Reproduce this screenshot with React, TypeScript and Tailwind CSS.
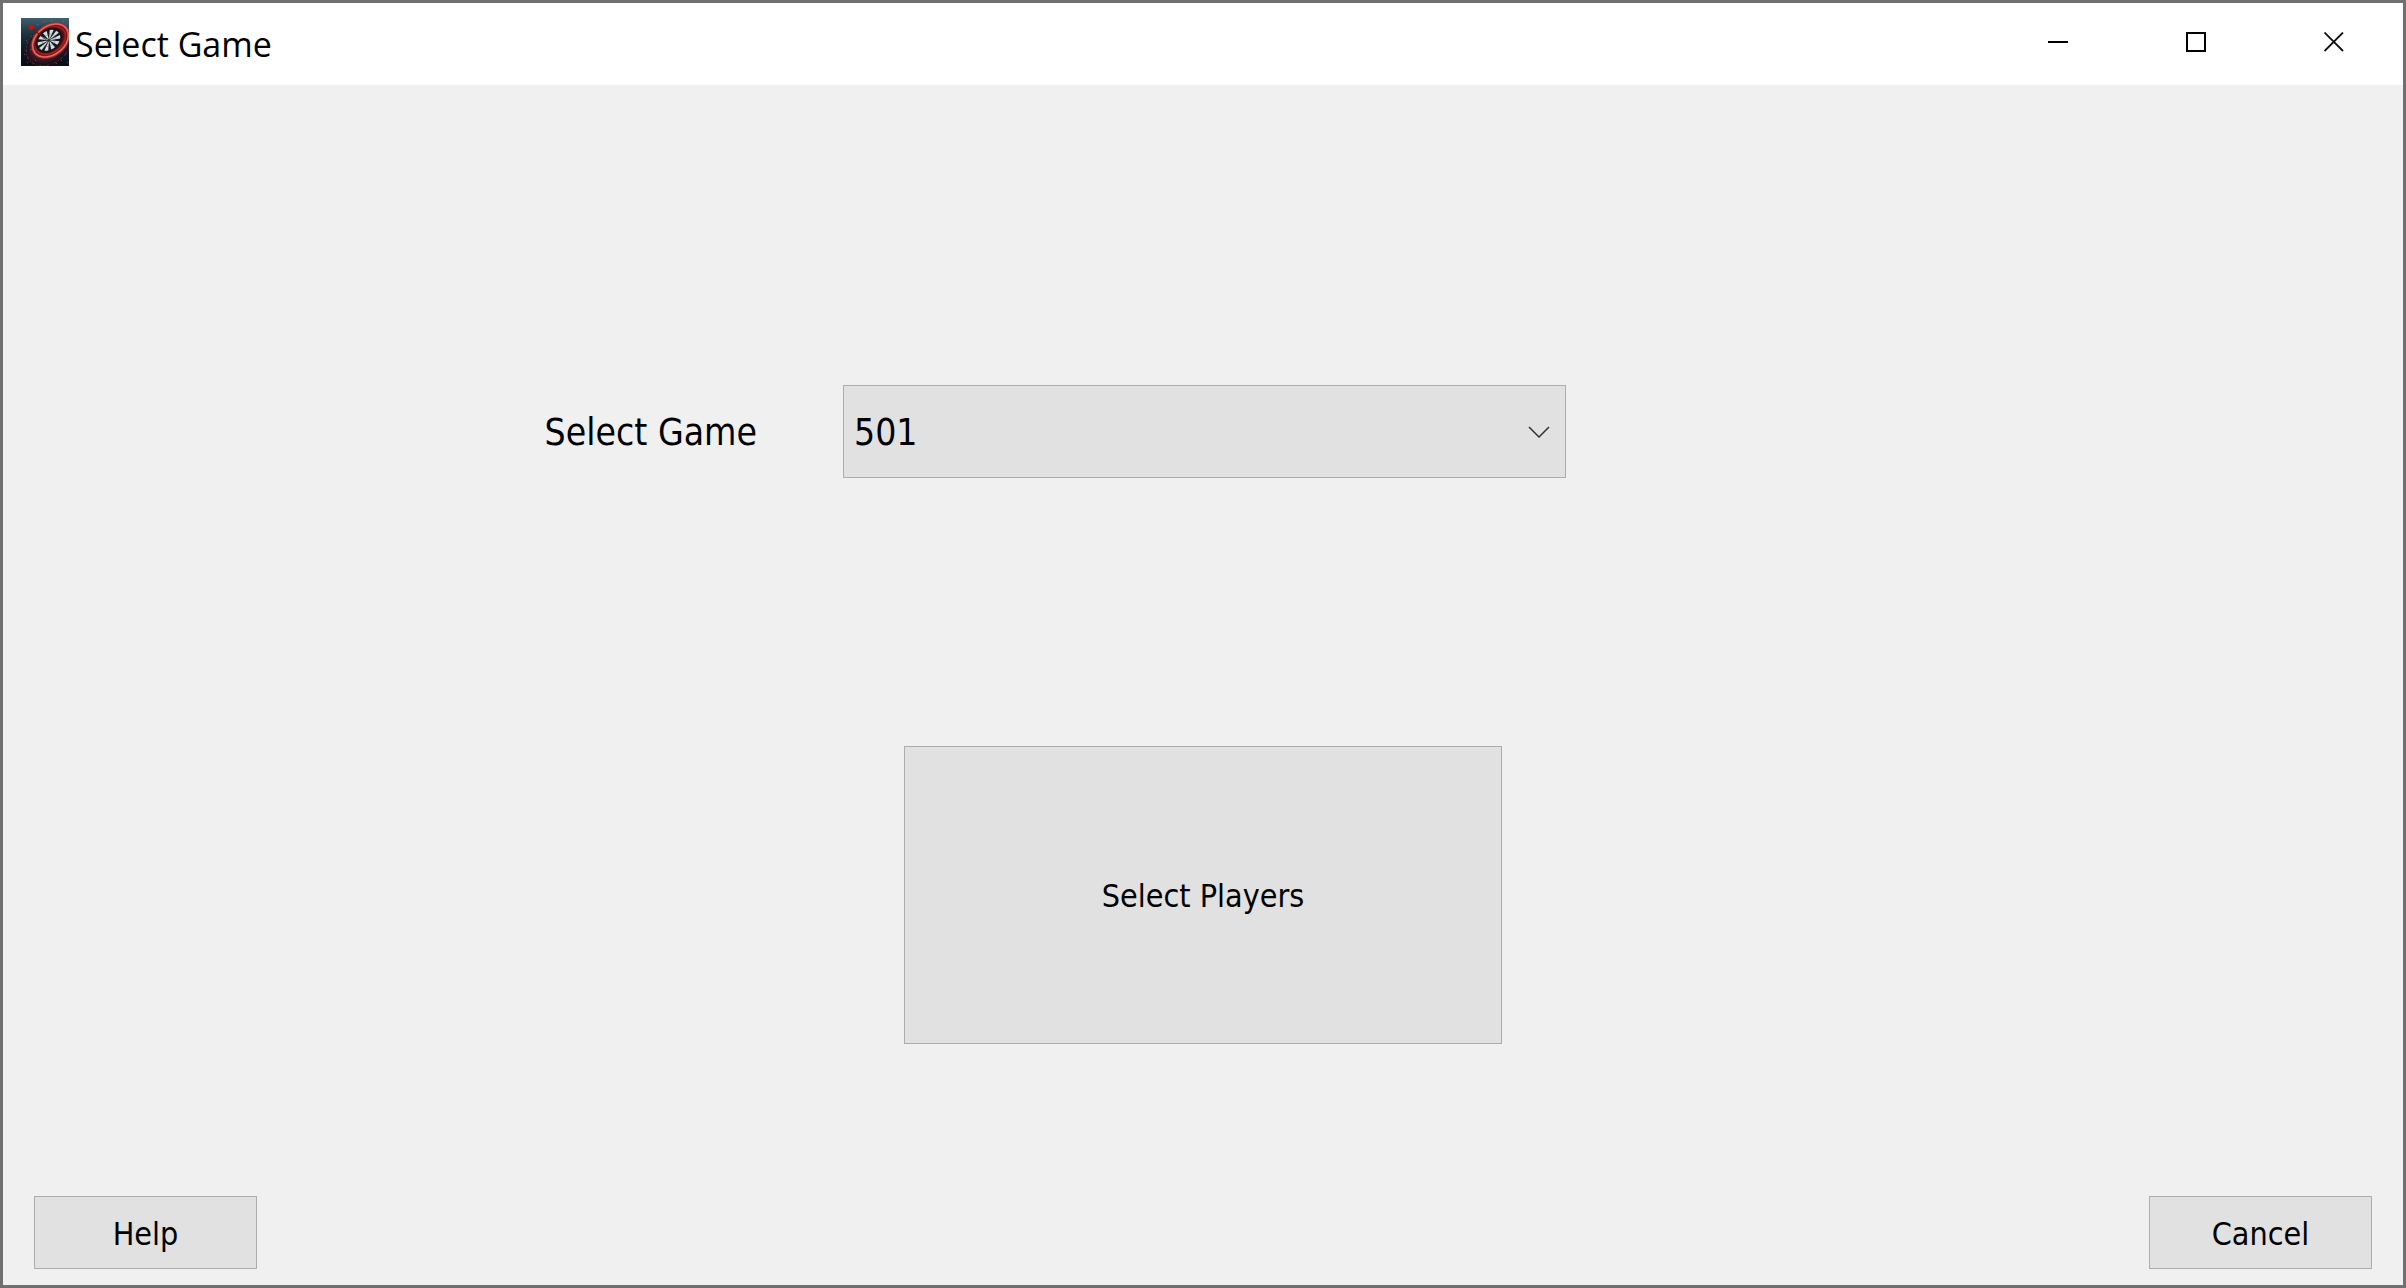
import { useState } from "react";

const SECTORS = Array.from({ length: 10 }, (_, i) => i * 36);
const SPARKS = [
  [23, 3], [30, 2], [16, 6], [42, 3], [5, 22], [9, 31], [3, 36], [14, 42], [40, 42], [44, 36], [35, 45], [6, 44], [12, 17], [46, 44],
];

function DartboardIcon() {
  return (
    <svg viewBox="0 0 48 48" className="size-12 shrink-0" aria-hidden="true">
      <defs>
        <linearGradient id="sky" x1="0.55" y1="0" x2="0.5" y2="1">
          <stop offset="0" stopColor="#41606e" />
          <stop offset="0.35" stopColor="#1d3341" />
          <stop offset="0.7" stopColor="#0c1824" />
          <stop offset="1" stopColor="#070d18" />
        </linearGradient>
        <radialGradient id="glow">
          <stop offset="0.6" stopColor="#6a1a20" stopOpacity="0.7" />
          <stop offset="0.85" stopColor="#3d1820" stopOpacity="0.5" />
          <stop offset="1" stopColor="#3a1420" stopOpacity="0" />
        </radialGradient>
        <clipPath id="frame">
          <rect width="48" height="48" />
        </clipPath>
      </defs>
      <g clipPath="url(#frame)">
        <rect width="48" height="48" fill="url(#sky)" />
        <g transform="translate(27 26) rotate(-38)">
          <ellipse rx="27" ry="20" fill="url(#glow)" />
          <ellipse rx="24.5" ry="18.5" cy="1" fill="none" stroke="#a3262c" strokeWidth="1.2" strokeDasharray="3 1.6 1 2" opacity="0.6" />
          <ellipse rx="22.6" ry="17" cy="1" fill="none" stroke="#1b1018" strokeWidth="1.6" strokeDasharray="4 1" opacity="0.7" />
        </g>
        <g transform="translate(29.5 22.5) rotate(-38)">
          <ellipse rx="20" ry="14.4" fill="#5c1014" />
          <ellipse rx="20" ry="14.4" fill="none" stroke="#c2373b" strokeWidth="3.4" opacity="0.5" />
          <ellipse rx="19.8" ry="14.2" fill="none" stroke="#ef6560" strokeWidth="1.5" />
          <ellipse rx="16.8" ry="11.6" fill="none" stroke="#a3211f" strokeWidth="1.6" />
        </g>
        <g transform="translate(28 22.3) rotate(-38) scale(1 0.74)">
          <circle r="15" fill="#2b0e11" />
          <circle r="13.6" fill="#17161b" />
          {SECTORS.map((a) => (
            <path key={a} d="M0 0 L-2.2 -12.2 A12.4 12.4 0 0 1 2.2 -12.2 Z" fill="#d3dde0" transform={`rotate(${a + 8})`} />
          ))}
          <circle r="7.4" fill="none" stroke="#4b565c" strokeWidth="0.4" />
          <circle r="1.6" fill="#2c3338" />
        </g>
        {SPARKS.map(([x, y]) => (
          <rect key={`${x}-${y}`} x={x} y={y} width="1" height="1" fill="#8fa7b3" opacity="0.4" />
        ))}
        <path d="M11 10 L20 18" stroke="#6d1a1e" strokeWidth="1.1" />
        <path d="M20 18 L27 23" stroke="#20242a" strokeWidth="0.8" />
        <path d="M7.5 8.5 L9 6.8 L12 8 L12.6 11 L10.5 12 L8 10.8 Z" fill="#cf0f12" />
      </g>
    </svg>
  );
}

const captionButton = "flex h-[78px] w-[138px] items-center justify-center hover:bg-[#e5e5e5]";
const pushButton =
  "flex items-center justify-center border border-[#adadad] bg-[#e1e1e1] pt-0.5 text-[32px] leading-10 hover:border-[#0078d7] hover:bg-[#e5f1fb]";

export default function App() {
  const [game, setGame] = useState("501");

  return (
    <div className="flex min-h-screen flex-col border-3 border-[#707070] bg-[#f0f0f0] font-['DejaVu_Sans_Condensed','Noto_Sans',sans-serif] text-black">
      <header className="flex h-[82px] items-start justify-between bg-white pl-[18px]">
        <div className="flex h-[78px] items-center gap-1.5">
          <DartboardIcon />
          <h1 className="pt-1 font-['Open_Sans','Noto_Sans',sans-serif] text-[34px] leading-10">Select Game</h1>
        </div>
        <div className="flex">
          <button type="button" aria-label="Minimize" className={captionButton}>
            <svg viewBox="0 0 20 20" className="size-5"><path d="M0 10H20" stroke="#000" strokeWidth="2" /></svg>
          </button>
          <button type="button" aria-label="Maximize" className={captionButton}>
            <svg viewBox="0 0 20 20" className="size-5"><path d="M1 1H19V19H1Z" fill="none" stroke="#000" strokeWidth="2" /></svg>
          </button>
          <button type="button" aria-label="Close" className={captionButton}>
            <svg viewBox="0 0 20 20" className="size-5"><path d="M0.5 0.5L19 19M19 0.5L0.5 19" stroke="#111" strokeWidth="1.8" /></svg>
          </button>
        </div>
      </header>

      <main className="grid flex-1 grid-rows-[300fr_auto_268fr_auto_152fr_auto] pb-4">
        <div className="row-start-2 grid grid-cols-[840fr_723fr_837fr] items-center">
          <label htmlFor="game" className="pt-0.5 pr-[86px] text-right text-[37px] leading-12">Select Game</label>
          <div className="grid items-center">
            <select
              id="game"
              value={game}
              onChange={(e) => setGame(e.target.value)}
              className="col-start-1 row-start-1 h-[93px] w-full appearance-none border border-[#adadad] bg-[#e1e1e1] pt-0.5 pl-2.5 text-[37px] leading-12"
            >
              <option>501</option>
              <option>301</option>
              <option>Cricket</option>
            </select>
            <svg viewBox="0 0 22 12" className="pointer-events-none col-start-1 row-start-1 mr-4 h-3 w-[22px] justify-self-end" aria-hidden="true">
              <path d="M1 1L11 11L21 1" fill="none" stroke="#333" strokeWidth="1.5" />
            </svg>
          </div>
        </div>

        <button type="button" className={`${pushButton} row-start-4 h-[298px] w-[598px] justify-self-center`}>
          Select Players
        </button>

        <footer className="row-start-6 flex justify-between px-[31px]">
          <button type="button" className={`${pushButton} h-[73px] w-[223px]`}>Help</button>
          <button type="button" className={`${pushButton} h-[73px] w-[223px]`}>Cancel</button>
        </footer>
      </main>
    </div>
  );
}
